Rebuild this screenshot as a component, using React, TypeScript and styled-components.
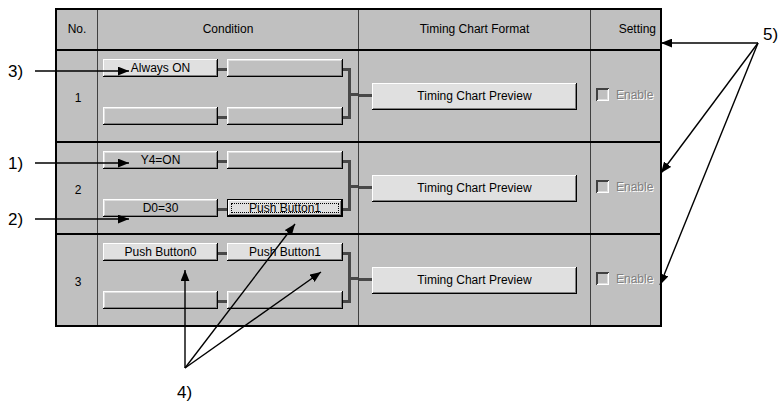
import React from "react";
import styled, { createGlobalStyle, css } from "styled-components";

const GlobalStyle = createGlobalStyle`
  html, body {
    margin: 0;
    padding: 0;
    background: #ffffff;
  }
`;

const Page = styled.div`
  position: relative;
  width: 783px;
  height: 403px;
  box-sizing: border-box;
  padding: 8px 0 0 55px;
  font-family: "Liberation Sans", Arial, sans-serif;
  font-size: 12px;
  color: #000;
  overflow: hidden;
`;

const Table = styled.div`
  width: 607px;
  box-sizing: border-box;
  border: 2px solid #000;
  background: #c0c0c0;
  display: flex;
  flex-direction: column;
`;

const Row = styled.div<{ $head?: boolean; $last?: boolean }>`
  display: grid;
  grid-template-columns: 41px 261px 232px 1fr;
  box-sizing: border-box;
  height: ${(p) => (p.$head ? 41 : p.$last ? 90 : 92)}px;
  border-bottom: ${(p) => (p.$last ? "none" : "2px solid #000")};
`;

const Cell = styled.div<{ $end?: boolean }>`
  box-sizing: border-box;
  border-right: ${(p) => (p.$end ? "none" : "1px solid #404040")};
  display: flex;
  align-items: center;
  min-width: 0;
`;

const HeadCell = styled(Cell)<{ $right?: boolean }>`
  justify-content: ${(p) => (p.$right ? "flex-end" : "center")};
  padding-right: ${(p) => (p.$right ? "4px" : "0")};
  padding-bottom: 1px;
`;

const NumCell = styled(Cell)`
  justify-content: center;
  padding-left: 2px;
  padding-top: 4px;
`;

const ConditionCell = styled(Cell)`
  align-items: flex-start;
  padding: 8px 0 0 5px;
`;

const Chains = styled.div`
  display: flex;
  flex-direction: column;
  gap: 30px;
`;

const Chain = styled.div`
  display: flex;
  align-items: flex-start;
`;

const Link = styled.div`
  width: 9px;
  height: 3px;
  margin-top: 9px;
  background: #484848;
`;

const Bracket = styled.div`
  width: 8px;
  height: 51px;
  margin-top: 9px;
  box-sizing: border-box;
  border: 3px solid #484848;
  border-left: none;
`;

const Tail = styled.div`
  flex: 1;
  height: 3px;
  margin-top: 34px;
  background: #484848;
`;

const bevel = css`
  box-shadow: inset -1px -1px #000, inset 1px 1px #fff, inset -2px -2px #808080,
    inset 2px 2px #dfdfdf;
`;

const Btn = styled.div<{ $w: number; $h: number; $light?: boolean; $focus?: boolean }>`
  position: relative;
  width: ${(p) => p.$w}px;
  height: ${(p) => p.$h}px;
  box-sizing: border-box;
  background: ${(p) => (p.$light ? "#e0e0e0" : "#c0c0c0")};
  ${bevel};
  display: flex;
  align-items: center;
  justify-content: center;
  white-space: nowrap;
  padding-bottom: 1px;
  ${(p) =>
    p.$focus &&
    css`
      box-shadow: inset 0 0 0 1px #000, inset -2px -2px #000, inset 2px 2px #fff,
        inset -3px -3px #808080;
      &::after {
        content: "";
        position: absolute;
        inset: 4px 4px 4px 4px;
        border: 1px dotted #000;
      }
    `}
`;

const TimingCell = styled(Cell)`
  padding-top: 1px;
`;

const Stub = styled.div`
  width: 13px;
  height: 3px;
  background: #484848;
  margin-top: -3px;
`;

const SettingCell = styled(Cell)`
  padding: 0 0 0 5px;
  gap: 7px;
  margin-top: -3px;
`;

const Check = styled.div`
  width: 13px;
  height: 13px;
  box-sizing: border-box;
  background: #c0c0c0;
  box-shadow: inset 1px 1px #404040, inset -1px -1px #fff, inset 2px 2px #404040,
    inset -2px -2px #dfdfdf;
`;

const Disabled = styled.span`
  color: #808080;
  text-shadow: 1px 1px 0 #fff;
`;

const Overlay = styled.svg`
  position: absolute;
  left: 0;
  top: 0;
  pointer-events: none;
  overflow: visible;
`;

const Label = styled.text`
  font-family: "Liberation Sans", Arial, sans-serif;
  font-size: 17px;
  fill: #000;
`;

type Cond = { text?: string; light?: boolean; focus?: boolean };

const rows: { no: number; chains: Cond[][] }[] = [
  {
    no: 1,
    chains: [
      [{ text: "Always ON", light: true }, {}],
      [{}, {}],
    ],
  },
  {
    no: 2,
    chains: [
      [{ text: "Y4=ON" }, {}],
      [{ text: "D0=30" }, { text: "Push Button1", light: true, focus: true }],
    ],
  },
  {
    no: 3,
    chains: [
      [
        { text: "Push Button0", light: true },
        { text: "Push Button1", light: true },
      ],
      [{}, {}],
    ],
  },
];

function Arrow({ x1, y1, x2, y2 }: { x1: number; y1: number; x2: number; y2: number }) {
  return <line x1={x1} y1={y1} x2={x2} y2={y2} stroke="#000" strokeWidth={1.4} markerEnd="url(#head)" />;
}

export default function App() {
  return (
    <>
      <GlobalStyle />
      <Page>
        <Table>
          <Row $head>
            <HeadCell>No.</HeadCell>
            <HeadCell>Condition</HeadCell>
            <HeadCell>Timing Chart Format</HeadCell>
            <HeadCell $end $right>
              Setting
            </HeadCell>
          </Row>
          {rows.map((r, i) => (
            <Row key={r.no} $last={i === rows.length - 1}>
              <NumCell>{r.no}</NumCell>
              <ConditionCell>
                <Chains>
                  {r.chains.map((c, j) => (
                    <Chain key={j}>
                      <Btn $w={115} $h={18} $light={c[0].light} $focus={c[0].focus}>
                        {c[0].text}
                      </Btn>
                      <Link />
                      <Btn $w={116} $h={18} $light={c[1].light} $focus={c[1].focus}>
                        {c[1].text}
                      </Btn>
                    </Chain>
                  ))}
                </Chains>
                <Bracket />
                <Tail />
              </ConditionCell>
              <TimingCell>
                <Stub />
                <Btn $w={205} $h={27} $light>
                  Timing Chart Preview
                </Btn>
              </TimingCell>
              <SettingCell $end>
                <Check />
                <Disabled>Enable</Disabled>
              </SettingCell>
            </Row>
          ))}
        </Table>
        <Overlay width={783} height={403} viewBox="0 0 783 403">
          <defs>
            <marker id="head" viewBox="0 0 10 8" refX="10" refY="4" markerWidth="11" markerHeight="9" orient="auto" markerUnits="userSpaceOnUse">
              <path d="M0 0 L10 4 L0 8 z" fill="#000" />
            </marker>
          </defs>
          <Label x={8} y={77}>3)</Label>
          <Arrow x1={35} y1={71} x2={129} y2={71} />
          <Label x={8} y={169}>1)</Label>
          <Arrow x1={35} y1={163} x2={129} y2={163} />
          <Label x={8} y={225}>2)</Label>
          <Arrow x1={35} y1={219} x2={129} y2={219} />
          <Label x={763} y={40}>5)</Label>
          <Arrow x1={758} y1={43} x2={661} y2={43} />
          <Arrow x1={758} y1={43} x2={661} y2={173} />
          <Arrow x1={758} y1={43} x2={660} y2={285} />
          <Label x={177} y={398}>4)</Label>
          <Arrow x1={185} y1={368} x2={185} y2={270} />
          <Arrow x1={185} y1={368} x2={295} y2={224} />
          <Arrow x1={185} y1={368} x2={321} y2={272} />
        </Overlay>
      </Page>
    </>
  );
}
